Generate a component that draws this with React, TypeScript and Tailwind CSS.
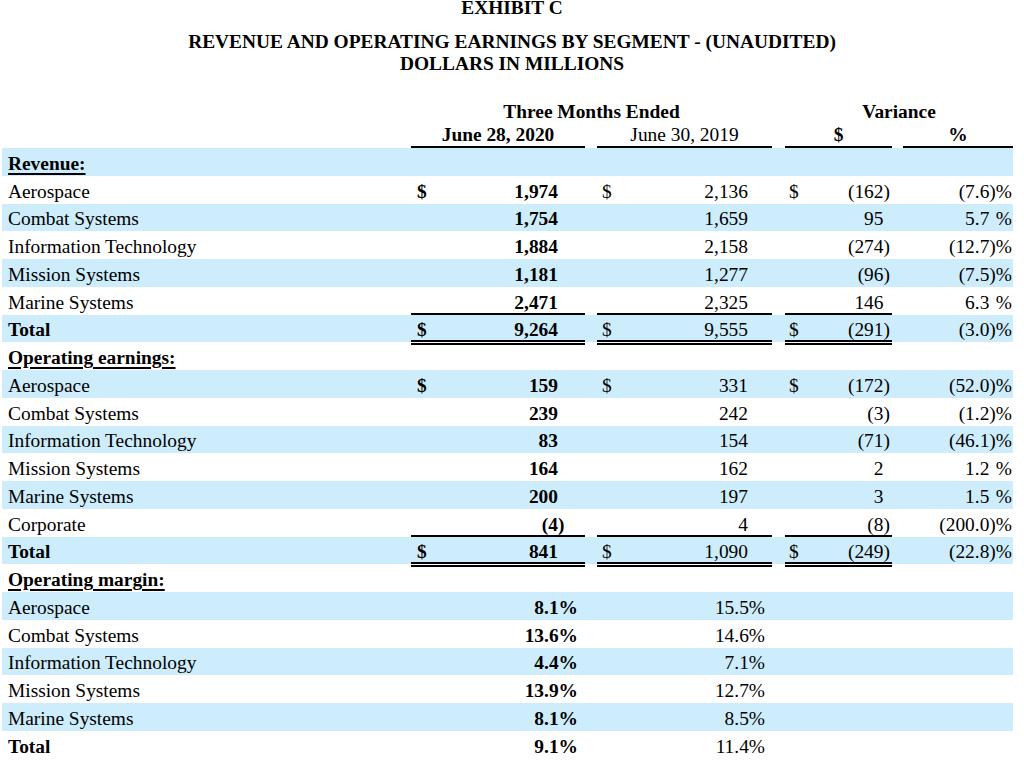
type Row =
  | { kind: 'section'; label: string }
  | { kind: 'data'; label: string; vals: string[]; dollar?: boolean; ruleBelow?: boolean; total?: boolean };

const rows: Row[] = [
  { kind: 'section', label: 'Revenue:' },
  { kind: 'data', label: 'Aerospace', vals: ['1,974', '2,136', '(162)', '(7.6)'], dollar: true },
  { kind: 'data', label: 'Combat Systems', vals: ['1,754', '1,659', '95', '5.7'] },
  { kind: 'data', label: 'Information Technology', vals: ['1,884', '2,158', '(274)', '(12.7)'] },
  { kind: 'data', label: 'Mission Systems', vals: ['1,181', '1,277', '(96)', '(7.5)'] },
  { kind: 'data', label: 'Marine Systems', vals: ['2,471', '2,325', '146', '6.3'], ruleBelow: true },
  { kind: 'data', label: 'Total', vals: ['9,264', '9,555', '(291)', '(3.0)'], dollar: true, total: true },
  { kind: 'section', label: 'Operating earnings:' },
  { kind: 'data', label: 'Aerospace', vals: ['159', '331', '(172)', '(52.0)'], dollar: true },
  { kind: 'data', label: 'Combat Systems', vals: ['239', '242', '(3)', '(1.2)'] },
  { kind: 'data', label: 'Information Technology', vals: ['83', '154', '(71)', '(46.1)'] },
  { kind: 'data', label: 'Mission Systems', vals: ['164', '162', '2', '1.2'] },
  { kind: 'data', label: 'Marine Systems', vals: ['200', '197', '3', '1.5'] },
  { kind: 'data', label: 'Corporate', vals: ['(4)', '4', '(8)', '(200.0)'], ruleBelow: true },
  { kind: 'data', label: 'Total', vals: ['841', '1,090', '(249)', '(22.8)'], dollar: true, total: true },
  { kind: 'section', label: 'Operating margin:' },
];

const margins = [
  ['Aerospace', '8.1%', '15.5%'],
  ['Combat Systems', '13.6%', '14.6%'],
  ['Information Technology', '4.4%', '7.1%'],
  ['Mission Systems', '13.9%', '12.7%'],
  ['Marine Systems', '8.1%', '8.5%'],
  ['Total', '9.1%', '11.4%'],
];

function Amount({ v, pct }: { v: string; pct?: boolean }) {
  const neg = v.startsWith('(');
  const core = neg ? v.slice(1, -1) : v;
  return (
    <span className="whitespace-nowrap">
      {neg ? '(' : ''}
      {core}
      <span className="inline-block w-[6.5px]">{neg ? ')' : ''}</span>
      {pct ? '%' : ''}
    </span>
  );
}

export default function App() {
  let band = 0;
  const rule = 'shadow-[inset_0_-2px_0_#000]';
  const dbl = 'shadow-[inset_0_-2px_0_#000,0_1px_0_#fff,0_3px_0_#000]';
  const cell = 'h-full flex items-center pt-[3px]';

  return (
    <div className="w-[1024px] h-[770px] overflow-hidden bg-white text-black font-['Liberation_Serif','Times_New_Roman',serif] text-[19.4px]">
      <div className="text-center font-bold leading-[23px]">
        <div className="leading-[16px]">EXHIBIT C</div>
        <div className="mt-[14px]">REVENUE AND OPERATING EARNINGS BY SEGMENT - (UNAUDITED)</div>
        <div className="-mt-[1px]">DOLLARS IN MILLIONS</div>
      </div>

      <div className="mt-[25px] ml-[2px] w-[1011px] font-bold leading-[23px]">
        <div className="flex">
          <div className="w-[409px]" />
          <div className="w-[361px] text-center">Three Months Ended</div>
          <div className="ml-[13px] w-[228px] text-center">Variance</div>
        </div>
        <div className="flex">
          <div className="w-[409px]" />
          <div className="w-[174px] text-center border-b-2 border-black">June 28, 2020</div>
          <div className="ml-[12px] w-[175px] text-center font-normal border-b-2 border-black">June 30, 2019</div>
          <div className="ml-[13px] w-[107px] text-center border-b-2 border-black">$</div>
          <div className="ml-[11px] w-[110px] text-center border-b-2 border-black">%</div>
        </div>
      </div>

      <div className="ml-[2px] w-[1011px]">
        {rows.map((r, i) => {
          const blue = band++ % 2 === 0 ? 'bg-[#cdedfc]' : '';
          if (r.kind === 'section') {
            return (
              <div key={i} className={`h-[27.76px] ${blue}`}>
                <div className={`${cell} pl-[6px] font-bold underline underline-offset-[3px] decoration-[1.5px]`}>{r.label}</div>
              </div>
            );
          }
          const line = r.total ? dbl : r.ruleBelow ? rule : '';
          return (
            <div key={i} className={`flex h-[27.76px] ${blue}`}>
              <div className={`${cell} w-[409px] pl-[6px] ${r.total ? 'font-bold' : ''}`}>{r.label}</div>
              <div className={`${cell} w-[174px] justify-between pl-[6px] pr-[20.5px] font-bold ${line}`}>
                <span>{r.dollar ? '$' : ''}</span>
                <Amount v={r.vals[0]} />
              </div>
              <div className={`${cell} ml-[12px] w-[175px] justify-between pl-[5px] pr-[17.5px] ${line}`}>
                <span>{r.dollar ? '$' : ''}</span>
                <Amount v={r.vals[1]} />
              </div>
              <div className={`${cell} ml-[13px] w-[107px] justify-between pl-[4px] pr-[2px] ${line}`}>
                <span>{r.dollar ? '$' : ''}</span>
                <Amount v={r.vals[2]} />
              </div>
              <div className={`${cell} ml-[11px] w-[110px] justify-end pr-[1px]`}>
                <Amount v={r.vals[3]} pct />
              </div>
            </div>
          );
        })}
        {margins.map((m, i) => {
          const blue = band++ % 2 === 0 ? 'bg-[#cdedfc]' : '';
          const isTotal = m[0] === 'Total';
          return (
            <div key={`m${i}`} className={`flex h-[27.76px] ${blue}`}>
              <div className={`${cell} w-[409px] pl-[6px] ${isTotal ? 'font-bold' : ''}`}>{m[0]}</div>
              <div className={`${cell} w-[174px] justify-end pr-[7px] font-bold`}>{m[1]}</div>
              <div className={`${cell} ml-[12px] w-[175px] justify-end pr-[7px]`}>{m[2]}</div>
              <div className="ml-[13px] w-[107px]" />
              <div className="ml-[11px] w-[110px]" />
            </div>
          );
        })}
      </div>
    </div>
  );
}
